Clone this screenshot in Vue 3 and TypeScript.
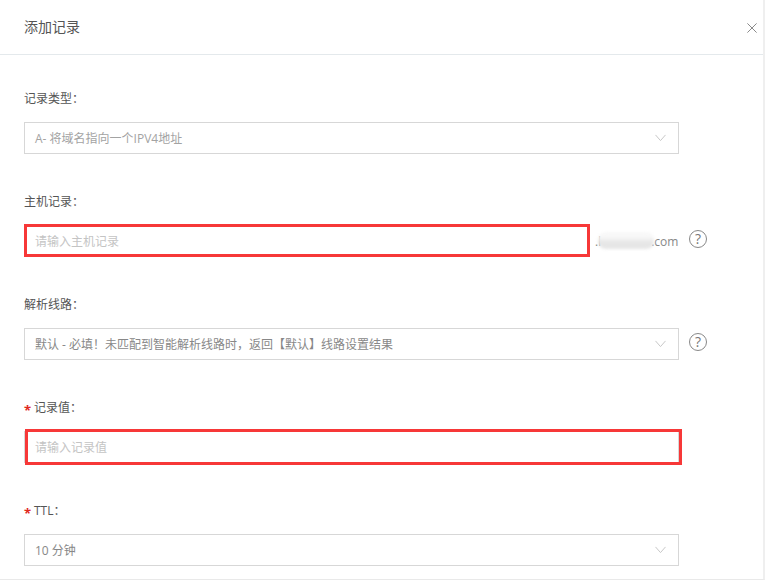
<script setup lang="ts">
const questionMark = '?'
</script>

<template>
  <div class="dialog">
    <header class="head">
      <h1 class="title">添加记录</h1>
      <svg class="close" width="10" height="10" viewBox="0 0 10 10" aria-label="关闭">
        <path d="M.4.4l9.2 9.2M9.6.4L.4 9.6" fill="none" stroke="#8a8a8a" stroke-width="1" />
      </svg>
    </header>

    <form class="body">
      <div class="field">
        <label class="label">记录类型：</label>
        <div class="row">
          <div class="control select">
            <span class="value muted">A- 将域名指向一个IPV4地址</span>
            <svg class="chevron" width="11" height="8" viewBox="0 0 11 8"><path d="M.5.9L5.5 6.6 10.5.9" /></svg>
          </div>
        </div>
      </div>

      <div class="field">
        <label class="label">主机记录：</label>
        <div class="row">
          <div class="control host mark">
            <span class="value placeholder">请输入主机记录</span>
          </div>
          <div class="suffix">
            <span>.l</span><span class="blur"></span><span>.com</span>
          </div>
          <span class="help">{{ questionMark }}</span>
        </div>
      </div>

      <div class="field">
        <label class="label">解析线路：</label>
        <div class="row">
          <div class="control select">
            <span class="value">默认 - 必填！未匹配到智能解析线路时，返回【默认】线路设置结果</span>
            <svg class="chevron" width="11" height="8" viewBox="0 0 11 8"><path d="M.5.9L5.5 6.6 10.5.9" /></svg>
          </div>
          <span class="help line-help">{{ questionMark }}</span>
        </div>
      </div>

      <div class="field">
        <label class="label"><i class="star">*</i>记录值：</label>
        <div class="row">
          <div class="control select">
            <span class="value placeholder">请输入记录值</span>
            <span class="annotation"></span>
          </div>
        </div>
      </div>

      <div class="field">
        <label class="label"><i class="star">*</i>TTL：</label>
        <div class="row">
          <div class="control select">
            <span class="value">10 分钟</span>
            <svg class="chevron" width="11" height="8" viewBox="0 0 11 8"><path d="M.5.9L5.5 6.6 10.5.9" /></svg>
          </div>
        </div>
      </div>
    </form>
  </div>
</template>

<style>
html, body { margin: 0; background: #fff; }
</style>

<style scoped>
.dialog {
  box-sizing: border-box;
  width: 765px;
  height: 580px;
  overflow: hidden;
  background: #fff;
  border-right: 2px solid #efefef;
  border-bottom: 1px solid #e9e9e9;
  font-family: "Open Sans", "Noto Sans CJK SC", sans-serif;
  font-size: 12px;
  color: #333;
}
.head {
  box-sizing: border-box;
  height: 55px;
  padding: 0 6px 0 24px;
  display: flex;
  align-items: center;
  justify-content: space-between;
  border-bottom: 1px solid #e4e9ec;
}
.title {
  margin: 0 0 2px;
  font-size: 14px;
  font-weight: 400;
  color: #555;
}
.close { display: block; margin-top: 2px; }
.body {
  padding: 35px 0 0 24px;
  display: flex;
  flex-direction: column;
  gap: 39px;
}
.field {
  display: flex;
  flex-direction: column;
  gap: 14px;
}
.label {
  height: 18px;
  line-height: 18px;
  color: #555;
  display: flex;
  align-items: center;
}
.star {
  width: 10px;
  font-style: normal;
  font-size: 13px;
  font-weight: 700;
  line-height: 18px;
  padding-top: 3px;
  color: #e0281e;
}
.row {
  display: flex;
  align-items: flex-start;
  height: 32px;
}
.control {
  box-sizing: border-box;
  position: relative;
  height: 32px;
  display: flex;
  align-items: center;
  justify-content: space-between;
  padding: 0 12px 0 10px;
  border: 1px solid #d7d7d7;
  background: #fff;
}
.select { width: 655px; }
.host { width: 566px; height: 33px; margin-top: -1px; }
.mark {
  border: 3px solid #f73838;
  padding-left: 8px;
}
.value {
  padding-top: 2px;
  line-height: 28px;
  color: #888;
}
.muted { color: #a3a3a3; }
.placeholder { color: #c4c4c4; }
.chevron { display: block; }
.chevron path {
  fill: none;
  stroke: #c8c8c8;
  stroke-width: 1;
}
.annotation {
  position: absolute;
  left: 0;
  top: -3px;
  width: 657px;
  height: 36px;
  box-sizing: border-box;
  border: 3px solid #f73838;
}
.suffix {
  box-sizing: border-box;
  width: 99px;
  height: 32px;
  padding-left: 5px;
  display: flex;
  align-items: center;
  color: #888;
  font-size: 12px;
}
.blur {
  width: 56px;
  height: 17px;
  margin: -1px -3px 0 -3px;
  flex: none;
  border-radius: 8px;
  background: linear-gradient(#f8f8f8 0 30%, #e6e6e6 60%);
  filter: blur(1.5px);
}
.help {
  box-sizing: border-box;
  flex: none;
  width: 18px;
  height: 18px;
  margin-top: 5px;
  border: 1.5px solid #888;
  border-radius: 50%;
  display: flex;
  align-items: center;
  justify-content: center;
  font-size: 14px;
  line-height: 1;
  color: #777;
}
.line-help { margin-left: 10px; }
</style>
